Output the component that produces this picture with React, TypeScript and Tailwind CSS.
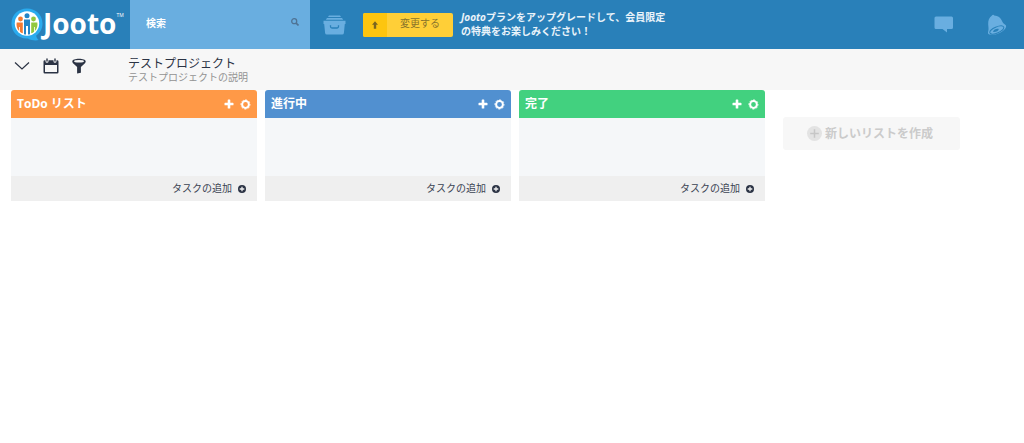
import { useState } from 'react'

type BoardList = { id: number; name: string; color: string }

const lists: BoardList[] = [
  { id: 1, name: 'ToDo リスト', color: 'bg-[#ff9947]' },
  { id: 2, name: '進行中', color: 'bg-[#5190d0]' },
  { id: 3, name: '完了', color: 'bg-[#42d17f]' },
]

function PlusIcon() {
  return (
    <svg viewBox="0 0 10 10" className="size-[10px]" fill="currentColor" aria-hidden="true">
      <path d="M3.700 1.200a.6.600 0 0 1 .6-.6h1.400a.6.600 0 0 1 .6.600v2.500h2.600a.6.600 0 0 1 .6.600v1.400a.6.600 0 0 1-.6.600H6.300v2.600a.6.600 0 0 1-.6.600H4.300a.6.600 0 0 1-.6-.6V6.300H1.100a.6.600 0 0 1-.6-.6V4.300a.6.600 0 0 1 .6-.6h2.600z" />
    </svg>
  )
}

function GearIcon() {
  return (
    <svg viewBox="0 0 12 12" className="size-[11px]" fill="none" stroke="currentColor" aria-hidden="true">
      <circle cx="6" cy="6" r="3.700" strokeWidth="2.200" />
      <circle cx="6" cy="6" r="5" strokeWidth="1" strokeDasharray="2.300 1.627" strokeDashoffset="1.150" />
    </svg>
  )
}

function CirclePlusIcon() {
  return (
    <svg viewBox="0 0 8 8" className="size-2" aria-hidden="true">
      <circle cx="4" cy="4" r="4" fill="#2b3344" />
      <path d="M4 1.700v4.600M1.700 4h4.600" stroke="#efefef" strokeWidth="1.300" />
    </svg>
  )
}

function Logo() {
  return (
    <a href="#" aria-label="Jooto" className="flex w-[130px] shrink-0 items-center pl-[11px] text-white">
      <svg viewBox="0 0 32 34" className="h-[34px] w-8 shrink-0" aria-hidden="true">
        <path d="M16 .5C24.800.5 31.500 7 31.500 15.500c0 5.300-2.500 9.400-6.300 12 .2 2 1.200 3.400 2.500 4.600-3.300.6-7.600.3-10.700-1.700C7.500 31 .5 24.300.5 15.500.5 7 7.200.5 16 .5z" fill="#2aabee" />
        <circle cx="16" cy="15.500" r="12.200" fill="#fff" />
        <circle cx="9.500" cy="11" r="2.400" fill="#f37a32" />
        <path d="M6.500 14.500h5.300v10.800c-1.300-.4-2.100-.9-2.900-1.600V19H8.100v3.900c-2.200-2.100-3-5.200-2.400-8.400z" fill="#f37a32" />
        <circle cx="16" cy="7.800" r="2.500" fill="#2385c7" />
        <path d="M13 11.500h6v14.800c-.6.200-1.300.3-2 .3V18h-2v8.600c-.7 0-1.400-.1-2-.3z" fill="#2385c7" />
        <circle cx="22.500" cy="11" r="2.400" fill="#93c83e" />
        <path d="M25.500 14.500h-5.300v10.800c1.300-.4 2.100-.9 2.900-1.600V19h.8v3.900c2.200-2.100 3-5.200 2.400-8.400z" fill="#93c83e" />
      </svg>
      <span className="pb-[3px] text-[28px] leading-8 font-bold">Jooto</span>
      <span className="mb-5 text-[5px] leading-3">TM</span>
    </a>
  )
}

function ListColumn({ list }: { list: BoardList }) {
  return (
    <section className="w-[246px] shrink-0 overflow-hidden rounded-t-[3px]">
      <header className={`flex h-7 items-center justify-between px-[6px] text-white ${list.color}`}>
        <h2 className="text-xs leading-4 font-bold">{list.name}</h2>
        <div className="flex items-center gap-[6px]">
          <button type="button" aria-label="追加"><PlusIcon /></button>
          <button type="button" aria-label="設定"><GearIcon /></button>
        </div>
      </header>
      <div className="h-[58px] bg-[#f5f7f9]" />
      <button type="button"
        className="flex h-[25px] w-full items-center justify-end gap-[6px] bg-[#efefef] pr-[11px] text-[10px] text-[#3a4252]">
        タスクの追加
        <CirclePlusIcon />
      </button>
    </section>
  )
}

export default function App() {
  const [query, setQuery] = useState('')

  return (
    <div className="min-h-screen bg-white font-['Open_Sans','Noto_Sans_CJK_JP',sans-serif]">

      {/* Top bar */}
      <header className="flex h-[49px] bg-[#2980b9]">
        <Logo />

        <form className="relative w-[180px] shrink-0" onSubmit={e => e.preventDefault()}>
          <input type="text" aria-label="検索" placeholder="検索" value={query}
            onChange={e => setQuery(e.target.value)}
            className="h-full w-full bg-[#69aee0] pr-8 pb-1 pl-4 text-[10px] font-bold text-white outline-none placeholder:text-white" />
          <button type="submit" aria-label="検索する" className="absolute top-[18px] right-[11px] flex">
            <svg viewBox="0 0 8 8" className="size-2" fill="none" stroke="#4f7394" aria-hidden="true">
              <circle cx="3.200" cy="3.200" r="2.500" strokeWidth="1.300" />
              <path d="M5.100 5.100l2.400 2.400" strokeWidth="1.600" />
            </svg>
          </button>
        </form>

        <button type="button" aria-label="アーカイブ" className="ml-[13px] shrink-0">
          <svg viewBox="0 0 23 20" className="h-5 w-[23px]" aria-hidden="true">
            <path d="M6 .5h11l1 1.500H5zM4 3h15l1.200 1.800H2.800z" fill="#69aee0" />
            <path d="M.5 5.700h22v3.200h-.7l-.9 9.100a1.800 1.800 0 0 1-1.800 1.600H3.900A1.800 1.800 0 0 1 2.100 18l-.9-9.100H.5z" fill="#69aee0" />
            <path d="M7.500 10.200v1.300a1.500 1.500 0 0 0 1.500 1.500h5a1.500 1.500 0 0 0 1.500-1.500v-1.300" fill="none" stroke="#2980b9" strokeWidth="1.300" />
          </svg>
        </button>

        <button type="button"
          className="ml-[17px] flex h-6 w-[90px] shrink-0 self-center overflow-hidden rounded-[2px] bg-[#ffcf37] text-[10px] text-[#8a742b]">
          <span className="flex h-full w-6 items-center justify-center bg-[#fdc50f]">
            <svg viewBox="0 0 8 8" className="size-2" fill="#7a6520" aria-hidden="true">
              <path d="M4 .3l3 3.500H5.200v3.900H2.800V3.800H1z" />
            </svg>
          </span>
          <span className="flex h-full flex-1 items-center justify-center pb-0.5">変更する</span>
        </button>

        <p className="ml-2 shrink-0 self-center pb-px text-[10px] leading-[14px] font-bold text-[#e9f3fa]">
          <em>Jooto</em>プランをアップグレードして、会員限定
          <br />
          の特典をお楽しみください！
        </p>

        <div className="ml-auto flex items-center gap-[33px] pr-[17px]">
          <button type="button" aria-label="メッセージ">
            <svg viewBox="0 0 20 17" className="h-[17px] w-5" fill="#69aee0" aria-hidden="true">
              <path d="M2 .5h15.500a1.500 1.500 0 0 1 1.500 1.500v9.500a1.500 1.500 0 0 1-1.500 1.500H13v3.500L8.500 13H2A1.500 1.500 0 0 1 .5 11.500V2A1.500 1.500 0 0 1 2 .5z" />
            </svg>
          </button>
          <button type="button" aria-label="お知らせ">
            <svg viewBox="0 0 20 22" className="h-[22px] w-5" aria-hidden="true">
              <path d="M5 1.600C5.400.6 6.800.7 7.200 1.400c3.900.1 6.500 2.400 7.700 5.400.8 2 1.500 3 3 3.700 1.700.8 1.500 2.400.4 3.900C15.800 18 9.500 21 4.200 20.800c-2.600-.1-3.800-1.300-3.100-3.100.8-2.200.3-4.500.1-7.200C1 6.800 2 3.600 5 1.600z" fill="#69aee0" />
              <ellipse cx="9.800" cy="16" rx="7.500" ry="3" transform="rotate(-24 9.800 16)" fill="none" stroke="#2980b9" strokeWidth=".9" />
              <path d="M6 18c.6-2.400 3.400-3.700 5.800-3-.2 1.900-3 3.400-5.800 3z" fill="#2980b9" />
            </svg>
          </button>
        </div>
      </header>

      {/* Project bar */}
      <div className="flex h-[41px] items-start bg-[#f7f7f7] pt-2 pl-[14px] text-[#2b3344]">
        <div className="flex h-[18px] w-[114px] items-center gap-[13px]">
          <button type="button" aria-label="開く">
            <svg viewBox="0 0 16 10" className="h-[10px] w-4" fill="none" stroke="currentColor" strokeWidth="1.200" aria-hidden="true">
              <path d="M1 1.500l7 6.500 7-6.500" />
            </svg>
          </button>
          <button type="button" aria-label="カレンダー">
            <svg viewBox="0 0 16 16" className="size-4" aria-hidden="true">
              <path d="M1.800 2.300h12.400A1.300 1.300 0 0 1 15.500 3.600v10.600a1.300 1.300 0 0 1-1.300 1.300H1.800A1.300 1.300 0 0 1 .5 14.200V3.600a1.300 1.300 0 0 1 1.300-1.300zM2 7v7h12V7z" fill="currentColor" fillRule="evenodd" />
              <path d="M4 .8v2.400M12 .8v2.400" stroke="#f7f7f7" strokeWidth="3" strokeLinecap="round" />
              <path d="M4 .9v2.200M12 .9v2.200" stroke="currentColor" strokeWidth="1.400" strokeLinecap="round" />
            </svg>
          </button>
          <button type="button" aria-label="フィルター">
            <svg viewBox="0 0 14 16" className="h-4 w-[14px]" aria-hidden="true">
              <path d="M.3 3.300C.3 1.700 3.300.700 7 .700s6.700 1 6.700 2.600c0 1-.4 1.700-1.300 2.500L8.900 9v5.700L5.100 15.500V9L1.600 5.800C.7 5 .3 4.300.3 3.300z" fill="currentColor" />
              <ellipse cx="7" cy="3.200" rx="5" ry="1.300" fill="#f7f7f7" />
            </svg>
          </button>
        </div>
        <div>
          <h1 className="text-xs leading-[14px]">テストプロジェクト</h1>
          <p className="text-[10px] leading-3 text-[#939393]">テストプロジェクトの説明</p>
        </div>
      </div>

      {/* Lists */}
      <main className="flex items-start gap-2 pl-[11px]">
        {lists.map(list => (
          <ListColumn key={list.id} list={list} />
        ))}
        <button type="button"
          className="mt-[27px] ml-[10px] flex h-[33px] w-[177px] shrink-0 items-center justify-center gap-[3px] rounded-[3px] bg-[#f7f7f7] pr-[3px] text-xs font-bold text-[#cbcbcb]">
          <svg viewBox="0 0 15 15" className="size-[15px]" aria-hidden="true">
            <circle cx="7.500" cy="7.500" r="7.500" fill="#e3e3e3" />
            <path d="M7.500 3.200v8.600M3.200 7.500h8.600" stroke="#c6c6c6" strokeWidth="1.500" />
          </svg>
          新しいリストを作成
        </button>
      </main>
    </div>
  )
}
